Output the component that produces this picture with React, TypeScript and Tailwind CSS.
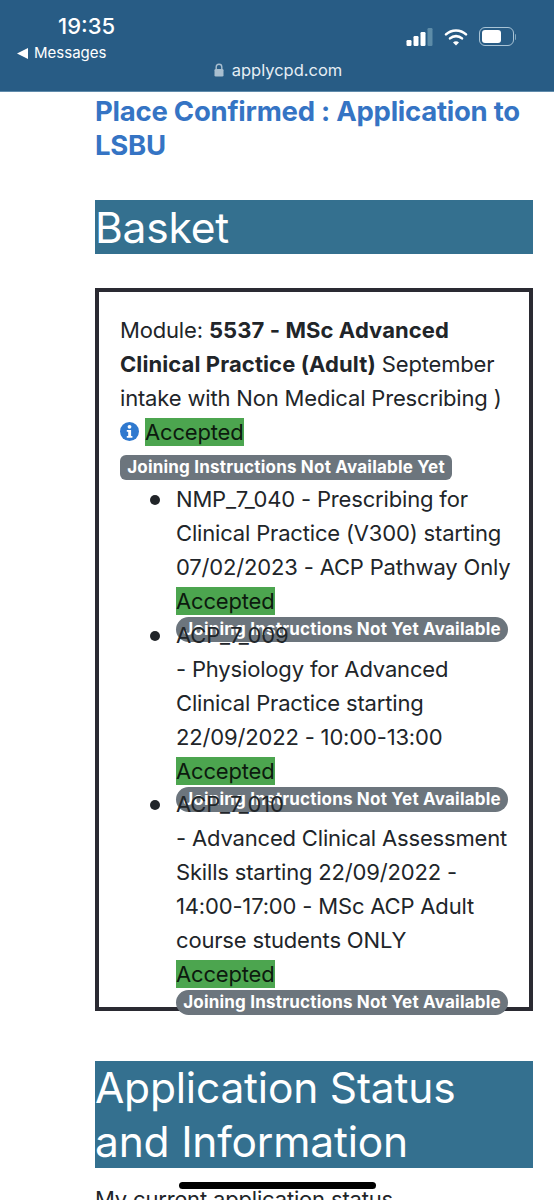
const font = "font-['Inter','Liberation_Sans',sans-serif]";

function Accepted() {
  return <span className="bg-[#4ca54f] text-[#0c1a0e] h-[28px] inline-flex items-center align-top mt-[3px]">Accepted</span>;
}

function PillBadge({ tight }: { tight?: boolean }) {
  return (
    <div className={`flex h-[25px] w-[332px] items-center justify-center rounded-full bg-[#6c757d] text-[17px] font-bold leading-none tracking-[0.2px] text-white -mt-[1px] ${tight ? "-mb-[25px]" : "-mb-[24px]"}`}>
      Joining Instructions Not Yet Available
    </div>
  );
}

function Item({ children, tight }: { children: React.ReactNode; tight?: boolean }) {
  return (
    <li className="relative before:absolute before:left-[-26px] before:top-[13px] before:h-[10px] before:w-[10px] before:rounded-full before:bg-[#212529]">
      {children}
      <div className="h-[34px]"><Accepted /></div>
      <PillBadge tight={tight} />
    </li>
  );
}

function StatusIcons() {
  return (
    <div className="flex items-center gap-[11px] pr-[38px]">
      <svg width="27" height="18" viewBox="0 0 26 18">
        <rect x="0" y="12" width="5" height="6" rx="1.2" fill="#fff" />
        <rect x="7" y="8" width="5" height="10" rx="1.2" fill="#fff" />
        <rect x="14" y="4" width="5" height="14" rx="1.2" fill="#fff" />
        <rect x="21" y="0" width="5" height="18" rx="1.2" fill="#5d8ca8" />
      </svg>
      <svg width="24" height="18" viewBox="0 0 24 18" fill="none" stroke="#fff" strokeLinecap="round">
        <path d="M2 6.4c5.6-5.2 14.4-5.2 20 0" strokeWidth="2.6" />
        <path d="M6 10.4c3.4-3 8.6-3 12 0" strokeWidth="2.6" />
        <path d="M12 17.6l-3-3.2c1.7-1.4 4.300-1.400 6 0z" fill="#fff" stroke="none" />
      </svg>
      <div className="flex items-center gap-[1px]">
        <div className="flex h-[19px] w-[35px] items-center rounded-[6px] border border-[#a9c4d6] p-[2px]">
          <div className="h-full w-[19px] rounded-[3px] bg-white" />
        </div>
        <div className="h-[6px] w-[1.5px] rounded-r bg-[#7fa5bd]" />
      </div>
    </div>
  );
}

export default function App() {
  return (
    <div className={`${font} h-[1200px] w-[554px] overflow-hidden bg-white text-[#212529] relative`}>
      <header className="flex h-[92px] flex-col bg-[#285c85] text-white border-b border-[#5f8bab]">
        <div className="flex items-start justify-between">
          <div className="pl-[17px] pt-[12px]">
            <div className="pl-[41px] text-[22px] font-medium leading-[28px]">19:35</div>
            <div className="flex items-center gap-[6px] text-[15px] leading-[20px] mt-[3px]">
              <svg width="11" height="11" viewBox="0 0 11 11"><path d="M0 5.500 11 0v11z" fill="#fff" /></svg>
              <span>Messages</span>
            </div>
          </div>
          <div className="pt-[27px]"><StatusIcons /></div>
        </div>
        <div className="flex items-center justify-center gap-[8px] pl-[2px] text-[16.500px] leading-[20px] mt-[-3px] text-[#e6eef4]">
          <svg width="10" height="14" viewBox="0 0 10 14" fill="none">
            <path d="M2.200 6.500V4a2.800 2.800 0 0 1 5.600 0v2.500" stroke="#a9bfd0" strokeWidth="1.400" />
            <rect x="0.500" y="6" width="9" height="7.500" rx="1.300" fill="#a9bfd0" />
          </svg>
          <span>applycpd.com</span>
        </div>
      </header>

      <main className="ml-[95px] w-[438px]">
        <h1 className="pt-[2px] text-[27.500px] font-bold leading-[34px] tracking-[-0.25px] text-[#3574c4]">
          Place Confirmed : Application to LSBU
        </h1>

        <h2 className="mt-[38px] h-[54px] bg-[#34708f] text-[42.500px] font-normal leading-[56px] tracking-[-0.2px] text-white">
          Basket
        </h2>

        <section className="mt-[34px] h-[723px] border-[4px] border-[#2a2a32] pl-[21px] pt-[21px] text-[22px] tracking-[-0.17px] leading-[34px]">
          <div className="w-[395px]">
            Module: <b className="font-bold tracking-[0.1px]">5537 - MSc Advanced Clinical Practice (Adult)</b> September intake with Non Medical Prescribing )
          </div>
          <div className="flex items-start gap-[6px] h-[34px]">
            <svg width="19" height="19" viewBox="0 0 19 19" className="mt-[7px]">
              <circle cx="9.500" cy="9.500" r="9.500" fill="#2f79cf" />
              <circle cx="9.500" cy="4.800" r="1.900" fill="#fff" />
              <path d="M6.800 8h4.300v6h1.300v1.800H6.800V14h1.400v-4.200H6.800z" fill="#fff" />
            </svg>
            <Accepted />
          </div>
          <div className="mt-[6px] flex h-[25px] w-[332px] items-center justify-center rounded-[6px] bg-[#6c757d] text-[17px] font-bold leading-none tracking-[0.2px] text-white">
            Joining Instructions Not Available Yet
          </div>
          <ul className="mt-[2px] w-[340px] pl-[56px] box-content">
            <Item>
              <div>NMP_7_040 - Prescribing for Clinical Practice (V300) starting 07/02/2023 - ACP Pathway Only</div>
            </Item>
            <Item tight>
              <div>ACP_7_009</div>
              <div>- Physiology for Advanced Clinical Practice starting 22/09/2022 - 10:00-13:00</div>
            </Item>
            <Item>
              <div>ACP_7_010</div>
              <div>- Advanced Clinical Assessment Skills starting 22/09/2022 - 14:00-17:00 - MSc ACP Adult course students ONLY</div>
            </Item>
          </ul>
        </section>

        <h2 className="mt-[50px] h-[107px] bg-[#34708f] text-[42.500px] font-normal leading-[54px] tracking-[-0.2px] text-white">
          Application Status<br />and Information
        </h2>

        <p className="mt-[14px] text-[22px] tracking-[-0.17px] leading-[34px]">My current application status</p>
      </main>

      <div className="absolute left-[179px] top-[1182px] h-[7px] w-[197px] rounded-full bg-black" />
    </div>
  );
}
